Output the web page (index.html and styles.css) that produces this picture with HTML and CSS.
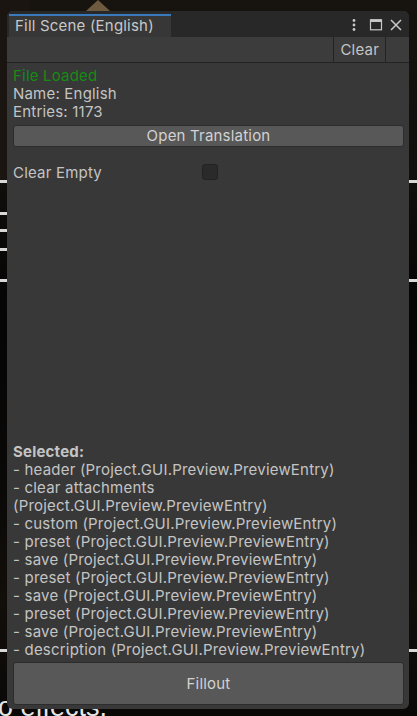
FILE: index.html
```html
<!DOCTYPE html>
<html>
<head>
<meta charset="utf-8">
<link rel="stylesheet" href="styles.css">
</head>
<body>
<div class="scene">
  <div class="bg-tri"></div>
  <div class="bg-left"></div>
  <div class="bg-line l1"></div>
  <div class="bg-line l2"></div>
  <div class="bg-line l3"></div>
  <div class="bg-line l4"></div>
  <div class="bg-line l5"></div>
  <div class="bg-line l6"></div>
  <div class="bg-text">o effects.</div>

  <div class="window">
    <div class="tabbar">
      <div class="tab">Fill Scene (English)</div>
      <div class="tab-icons">
        <svg class="ico kebab" width="8" height="14" viewBox="0 0 8 14"><circle cx="4" cy="2.5" r="1.4" fill="#c8c8c8"/><circle cx="4" cy="7" r="1.4" fill="#c8c8c8"/><circle cx="4" cy="11.5" r="1.4" fill="#c8c8c8"/></svg>
        <svg class="ico maxi" width="14" height="14" viewBox="0 0 14 14"><rect x="1.5" y="1.8" width="11" height="10" fill="none" stroke="#c8c8c8" stroke-width="1.2"/><rect x="1.5" y="1.4" width="11" height="2.6" fill="#c8c8c8"/></svg>
        <svg class="ico close" width="14" height="14" viewBox="0 0 14 14"><path d="M2 2 L12 12 M12 2 L2 12" stroke="#c8c8c8" stroke-width="1.5"/></svg>
      </div>
    </div>
    <div class="toolbar">
      <div class="tbtn">Clear</div>
      <div class="tspace"></div>
    </div>
    <div class="content">
      <div class="line green">File Loaded</div>
      <div class="line">Name: English</div>
      <div class="line">Entries: 1173</div>
      <div class="btn open">Open Translation</div>
      <div class="row">
        <div class="row-label">Clear Empty</div>
        <div class="checkbox"></div>
      </div>
      <div class="spacer"></div>
      <div class="line bold">Selected:</div>
      <div class="line">- header (Project.GUI.Preview.PreviewEntry)</div>
      <div class="line">- clear attachments</div>
      <div class="line">(Project.GUI.Preview.PreviewEntry)</div>
      <div class="line">- custom (Project.GUI.Preview.PreviewEntry)</div>
      <div class="line">- preset (Project.GUI.Preview.PreviewEntry)</div>
      <div class="line">- save (Project.GUI.Preview.PreviewEntry)</div>
      <div class="line">- preset (Project.GUI.Preview.PreviewEntry)</div>
      <div class="line">- save (Project.GUI.Preview.PreviewEntry)</div>
      <div class="line">- preset (Project.GUI.Preview.PreviewEntry)</div>
      <div class="line">- save (Project.GUI.Preview.PreviewEntry)</div>
      <div class="line">- description (Project.GUI.Preview.PreviewEntry)</div>
      <div class="btn fill">Fillout</div>
    </div>
  </div>
</div>
</body>
</html>
```
FILE: styles.css
```css
html, body {
  margin: 0;
  padding: 0;
}
body {
  background: #050505;
  font-family: Inter, "Noto Sans", sans-serif;
  width: 417px;
  height: 716px;
  overflow: hidden;
}
.scene {
  position: relative;
  width: 417px;
  height: 716px;
  overflow: hidden;
  background: linear-gradient(180deg, #17130f 0px, #120f0c 170px, #060505 300px, #090807 470px, #120e0a 600px, #0a0807 716px);
}
.bg-left {
  position: absolute;
  left: 0;
  top: 0;
  width: 30px;
  height: 180px;
  background: #1a1510;
}
.bg-tri {
  position: absolute;
  left: 86px;
  top: 0;
  width: 0;
  height: 0;
  border-left: 12px solid transparent;
  border-right: 12px solid transparent;
  border-bottom: 11px solid #6e5a3e;
}
.bg-line {
  position: absolute;
  left: 0;
  width: 417px;
  height: 3px;
  background: #d8d8d8;
}
.l1 { top: 180px; }
.l2 { top: 212px; width: 30px; }
.l3 { top: 229px; width: 30px; }
.l4 { top: 248px; width: 30px; }
.l5 { top: 279px; }
.l6 { top: 649px; }
.bg-text {
  position: absolute;
  left: -2px;
  top: 690px;
  height: 26px;
  overflow: hidden;
  font-family: "Liberation Sans", sans-serif;
  font-size: 27px;
  line-height: 34px;
  color: #e6e6e6;
  white-space: nowrap;
}
.window {
  position: absolute;
  left: 7px;
  top: 11px;
  width: 402px;
  height: 698px;
  background: #383838;
  border-radius: 6px;
  overflow: hidden;
  display: flex;
  flex-direction: column;
  color: #c4c4c4;
  font-size: 15px;
  letter-spacing: 0.2px;
}
.tabbar {
  height: 26px;
  flex: none;
  background: #282828;
  display: flex;
  align-items: stretch;
  padding-top: 3px;
  box-sizing: border-box;
}
.tab {
  margin-left: 2px;
  width: 162px;
  border-top: 2px solid #3a79bb;
  background: #373737;
  box-sizing: border-box;
  padding-left: 6px;
  line-height: 20px;
  font-size: 15px;
  color: #c8c8c8;
  white-space: nowrap;
}
.tab-icons {
  margin-left: auto;
  display: flex;
  align-items: center;
  padding-right: 6px;
  padding-bottom: 2px;
}
.ico { display: block; }
.kebab { margin-right: 11px; }
.maxi { margin-right: 6px; }
.toolbar {
  height: 26px;
  flex: none;
  box-sizing: border-box;
  background: #3c3c3c;
  border-bottom: 1px solid #232323;
  display: flex;
  justify-content: flex-end;
}
.tbtn {
  border-left: 1px solid #232323;
  border-right: 1px solid #232323;
  padding: 0 6px;
  line-height: 25px;
  font-size: 15px;
  color: #c4c4c4;
}
.tspace {
  width: 23px;
}
.content {
  flex: 1;
  display: flex;
  flex-direction: column;
  padding: 4px 5px 4px 6px;
  min-height: 0;
}
.line {
  line-height: 18px;
  height: 18px;
  white-space: nowrap;
}
.green { color: #148c14; }
.bold { font-weight: 700; }
.btn {
  background: #585858;
  border: 1px solid #2c2c2c;
  border-radius: 3px;
  box-sizing: border-box;
  text-align: center;
  color: #d2d2d2;
}
.open {
  margin-top: 4px;
  height: 22px;
  line-height: 20px;
}
.row {
  margin-top: 16px;
  height: 18px;
  display: flex;
  align-items: center;
}
.row-label {
  width: 189px;
}
.checkbox {
  width: 16px;
  height: 16px;
  box-sizing: border-box;
  background: #2a2a2a;
  border: 1px solid #222;
  border-radius: 3px;
}
.spacer { flex: 1; }
.fill {
  margin-top: 3px;
  height: 43px;
  line-height: 41px;
}
```
